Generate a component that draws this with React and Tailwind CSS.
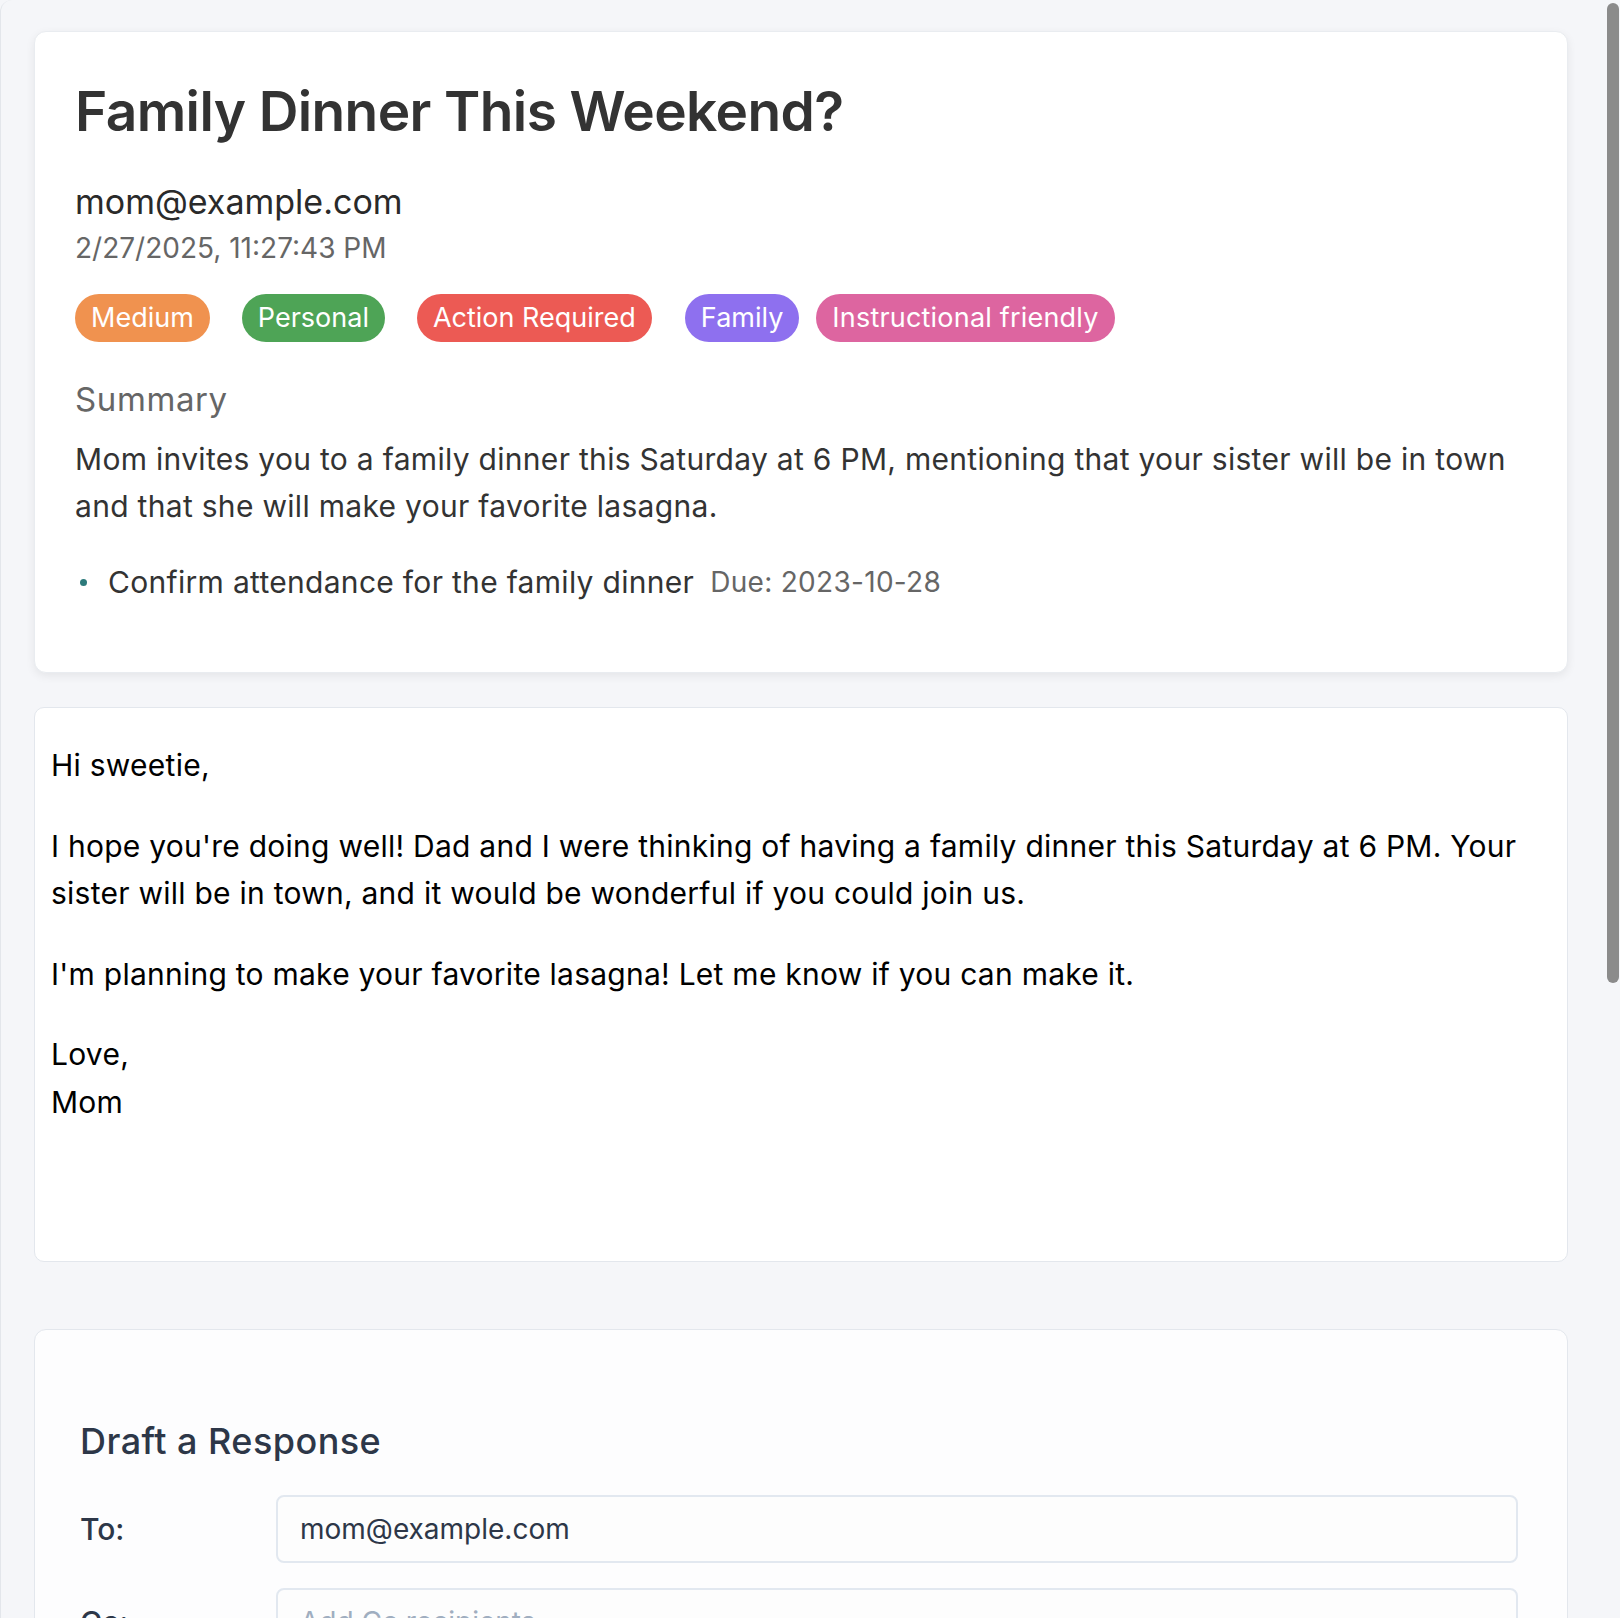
import React from "react";

const font = { fontFamily: "Inter, 'Noto Sans', sans-serif" };

function Badge({ children, color, className = "" }) {
  return (
    <span
      className={`inline-flex h-[48px] items-center rounded-full px-[16px] text-[27px] leading-[34px] text-white ${color} ${className}`}
    >
      {children}
    </span>
  );
}

export default function App() {
  return (
    <div
      className="relative h-[1618px] w-full overflow-hidden bg-[#f5f6f9]"
      style={font}
    >
      <div className="h-full rounded-tl-[12px] border-l border-[#e3e6eb] pl-[33px] pr-[52px] pt-[31px]">
        {/* Card 1: summary */}
        <div className="rounded-[12px] border border-[#e9ecf0] bg-white pb-[70px] pl-[40px] pr-[40px] pt-[47px] shadow-[0_3px_10px_rgba(0,0,0,0.07)]">
          <h1 className="text-[55px] font-semibold leading-[64px] tracking-[-0.6px] text-[#333333]">
            Family Dinner This Weekend?
          </h1>
          <div className="mt-[39px] text-[34px] leading-[40px] text-[#2a2a2a]">
            mom@example.com
          </div>
          <div className="mt-[9px] text-[28px] leading-[34px] text-[#666666]">
            2/27/2025, 11:27:43 PM
          </div>
          <div className="mt-[29px] flex items-center">
            <Badge color="bg-[#f0924f]" className="mr-[32px]">Medium</Badge>
            <Badge color="bg-[#4ea456]" className="mr-[32px]">Personal</Badge>
            <Badge color="bg-[#ec5a54]" className="mr-[33px]">Action Required</Badge>
            <Badge color="bg-[#8e70ef]" className="mr-[17px]">Family</Badge>
            <Badge color="bg-[#dd65a0]" className="tracking-[0.2px]">Instructional friendly</Badge>
          </div>
          <h2 className="mt-[37px] text-[33px] leading-[40px] tracking-[0.6px] text-[#666666]">
            Summary
          </h2>
          <p className="mt-[17px] text-[30px] leading-[47px] tracking-[0.3px] text-[#333333]">
            Mom invites you to a family dinner this Saturday at 6 PM, mentioning
            that your sister will be in town and that she will make your
            favorite lasagna.
          </p>
          <ul className="mt-[32px]">
            <li className="flex items-center text-[30px] leading-[40px] tracking-[0.3px] text-[#333333]">
              <span className="ml-[5px] mr-[21px] h-[7px] w-[7px] shrink-0 rounded-full bg-[#2c7a7b]" />
              <span>Confirm attendance for the family dinner</span>
              <span className="ml-[16px] text-[28px] text-[#666666]">
                Due: 2023-10-28
              </span>
            </li>
          </ul>
        </div>

        {/* Card 2: body */}
        <div className="mt-[34px] min-h-[555px] rounded-[10px] border border-[#e3e7ed] bg-white px-[16px] pt-[34px] text-[30px] leading-[47.5px] tracking-[0.25px] text-black">
          <p className="mb-[33px]">Hi sweetie,</p>
          <p className="mb-[33px]">
            I hope you're doing well! Dad and I were thinking of having a family
            dinner this Saturday at 6 PM. Your sister will be in town, and it
            would be wonderful if you could join us.
          </p>
          <p className="mb-[33px]">
            I'm planning to make your favorite lasagna! Let me know if you can
            make it.
          </p>
          <p>
            Love,
            <br />
            Mom
          </p>
        </div>

        {/* Card 3: draft */}
        <div className="mt-[67px] rounded-[12px] border border-[#e3e7ed] bg-[#fdfdfe] pb-[40px] pl-[45px] pr-[49px] pt-[90px]">
          <h2 className="text-[36px] font-medium leading-[42px] tracking-[0.45px] text-[#2d3748]">
            Draft a Response
          </h2>
          <div className="mt-[33px] flex flex-col gap-[25px]">
            <div className="flex items-center">
              <label className="w-[196px] shrink-0 text-[30px] font-medium text-[#2d3748]">
                To:
              </label>
              <div className="flex h-[68px] flex-1 items-center rounded-[8px] border-2 border-[#e2e8f0] bg-[#fdfdfd] px-[22px] text-[28px] text-[#2d3748]">
                mom@example.com
              </div>
            </div>
            <div className="flex items-center">
              <label className="w-[196px] shrink-0 text-[30px] font-medium text-[#2d3748]">
                Cc:
              </label>
              <div className="flex h-[68px] flex-1 items-center rounded-[8px] border-2 border-[#e2e8f0] bg-[#fdfdfd] px-[22px] text-[28px] text-[#a0aec0]">
                Add Cc recipients
              </div>
            </div>
            <div className="flex items-center">
              <label className="w-[196px] shrink-0 text-[30px] font-medium text-[#2d3748]">
                Subject:
              </label>
              <div className="flex h-[68px] flex-1 items-center rounded-[8px] border-2 border-[#e2e8f0] bg-[#fdfdfd] px-[22px] text-[28px] text-[#2d3748]">
                Re: Family Dinner This Weekend?
              </div>
            </div>
          </div>
        </div>
      </div>

      {/* overlay scrollbar thumb */}
      <div className="absolute right-[1px] top-[3px] h-[980px] w-[12px] rounded-full bg-[#8b8b8b]" />
    </div>
  );
}
